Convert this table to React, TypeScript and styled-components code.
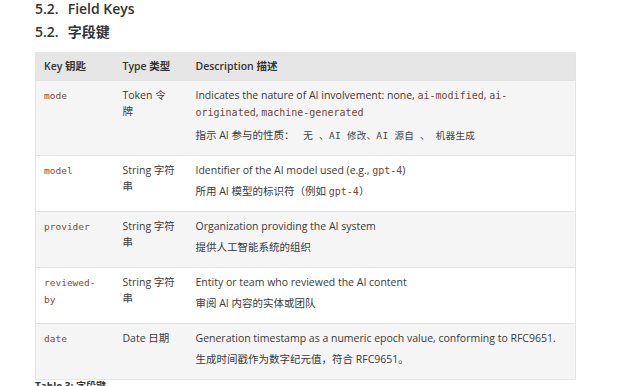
import styled, { createGlobalStyle } from "styled-components";

const GlobalStyle = createGlobalStyle`
  html, body {
    margin: 0;
    padding: 0;
    background: #ffffff;
    overflow: hidden;
  }
  body {
    font-family: "Open Sans", "Noto Sans", "Noto Sans CJK SC", sans-serif;
    color: #3a3a3a;
  }
`;

const Page = styled.div`
  width: 626px;
  height: 386px;
  padding: 0 50px 0 35px;
  box-sizing: border-box;
  overflow: hidden;
`;

const Heading = styled.h3`
  display: flex;
  gap: 9px;
  margin: 0;
  font-size: 14px;
  line-height: 23px;
  font-weight: 600;
  color: #333333;
  &:first-child {
    margin-top: -3px;
  }
`;

const Table = styled.table`
  width: 541px;
  margin-top: 9px;
  border-collapse: collapse;
  table-layout: fixed;
  font-size: 10.5px;
  line-height: 16px;
  border-left: 1px solid #e4e4e4;
  border-right: 1px solid #e4e4e4;
  border-bottom: 1px solid #e4e4e4;
  th,
  td {
    box-sizing: border-box;
  }
`;

const HeadRow = styled.tr`
  background: #e6e6e6;
`;

const HeadCell = styled.th<{ w?: number }>`
  width: ${(p) => (p.w ? `${p.w}px` : "auto")};
  padding: 6px 8px 6px 8px;
  height: 28px;
  text-align: left;
  font-weight: 600;
  color: #333333;
`;

const Row = styled.tr<{ striped: boolean }>`
  background: ${(p) => (p.striped ? "#f5f5f5" : "#ffffff")};
  border-top: 1px solid #e2e2e2;
  vertical-align: top;
`;

const Cell = styled.td<{ padRight?: number; roomy?: boolean }>`
  padding: 6px ${(p) => p.padRight ?? 8}px ${(p) => (p.roomy ? 12 : 11)}px 8px;
`;

const KeyCode = styled.code`
  font-family: "DejaVu Sans Mono", "Liberation Mono", monospace;
  font-size: 9.5px;
  color: #7a4e40;
`;

const Code = styled.code`
  font-family: "DejaVu Sans Mono", "Liberation Mono", monospace;
  font-size: 10px;
  color: #6e4a3c;
`;

const MonoCjk = styled.span`
  font-family: "DejaVu Sans Mono", "Noto Sans CJK SC", monospace;
  font-size: 9.5px;
  letter-spacing: 0.3px;
  color: #444444;
`;

const TypeLine = styled.span`
  display: block;
  white-space: nowrap;
`;

const Para = styled.p<{ gap?: number }>`
  margin: 0 0 ${(p) => p.gap ?? 4}px 0;
  &:last-child {
    margin-bottom: 0;
  }
`;

const Caption = styled.div`
  margin-top: 0;
  font-size: 10px;
  line-height: 12px;
  font-weight: 700;
  color: #333333;
`;

interface IField {
  key: string;
  type: string[];
  en: React.ReactNode;
  zh: React.ReactNode;
}

const fields: IField[] = [
  {
    key: "mode",
    type: ["Token 令", "牌"],
    en: (
      <>
        Indicates the nature of AI involvement: none, <Code>ai-modified</Code>,{" "}
        <Code>ai-originated</Code>, <Code>machine-generated</Code>
      </>
    ),
    zh: (
      <>
        指示 AI 参与的性质：{" "}
        <MonoCjk>&nbsp;无 、AI 修改、AI 源自 、 机器生成</MonoCjk>
      </>
    ),
  },
  {
    key: "model",
    type: ["String 字符", "串"],
    en: (
      <>
        Identifier of the AI model used (e.g., <Code>gpt-4</Code>)
      </>
    ),
    zh: (
      <>
        所用 AI 模型的标识符（例如 <Code>gpt-4</Code>）
      </>
    ),
  },
  {
    key: "provider",
    type: ["String 字符", "串"],
    en: "Organization providing the AI system",
    zh: "提供人工智能系统的组织",
  },
  {
    key: "reviewed-by",
    type: ["String 字符", "串"],
    en: "Entity or team who reviewed the AI content",
    zh: "审阅 AI 内容的实体或团队",
  },
  {
    key: "date",
    type: ["Date 日期"],
    en: "Generation timestamp as a numeric epoch value, conforming to RFC9651.",
    zh: "生成时间戳作为数字纪元值，符合 RFC9651。",
  },
];

const App = () => {
  return (
    <Page>
      <GlobalStyle />
      <Heading>
        <span>5.2.</span>
        <span>Field Keys</span>
      </Heading>
      <Heading>
        <span>5.2.</span>
        <span>字段键</span>
      </Heading>
      <Table>
        <thead>
          <HeadRow>
            <HeadCell w={79}>Key 钥匙</HeadCell>
            <HeadCell w={73}>Type 类型</HeadCell>
            <HeadCell>Description 描述</HeadCell>
          </HeadRow>
        </thead>
        <tbody>
          {fields.map((f, i) => {
            const roomy = i >= 2;
            return (
              <Row key={f.key} striped={i % 2 === 0}>
                <Cell padRight={14} roomy={roomy}>
                  <KeyCode>{f.key}</KeyCode>
                </Cell>
                <Cell roomy={roomy}>
                  {f.type.map((t) => (
                    <TypeLine key={t}>{t}</TypeLine>
                  ))}
                </Cell>
                <Cell roomy={roomy}>
                  <Para gap={i === 0 ? 6 : roomy ? 5 : 4}>{f.en}</Para>
                  <Para>{f.zh}</Para>
                </Cell>
              </Row>
            );
          })}
        </tbody>
      </Table>
      <Caption>Table 3: 字段键</Caption>
    </Page>
  );
};

export default App;
